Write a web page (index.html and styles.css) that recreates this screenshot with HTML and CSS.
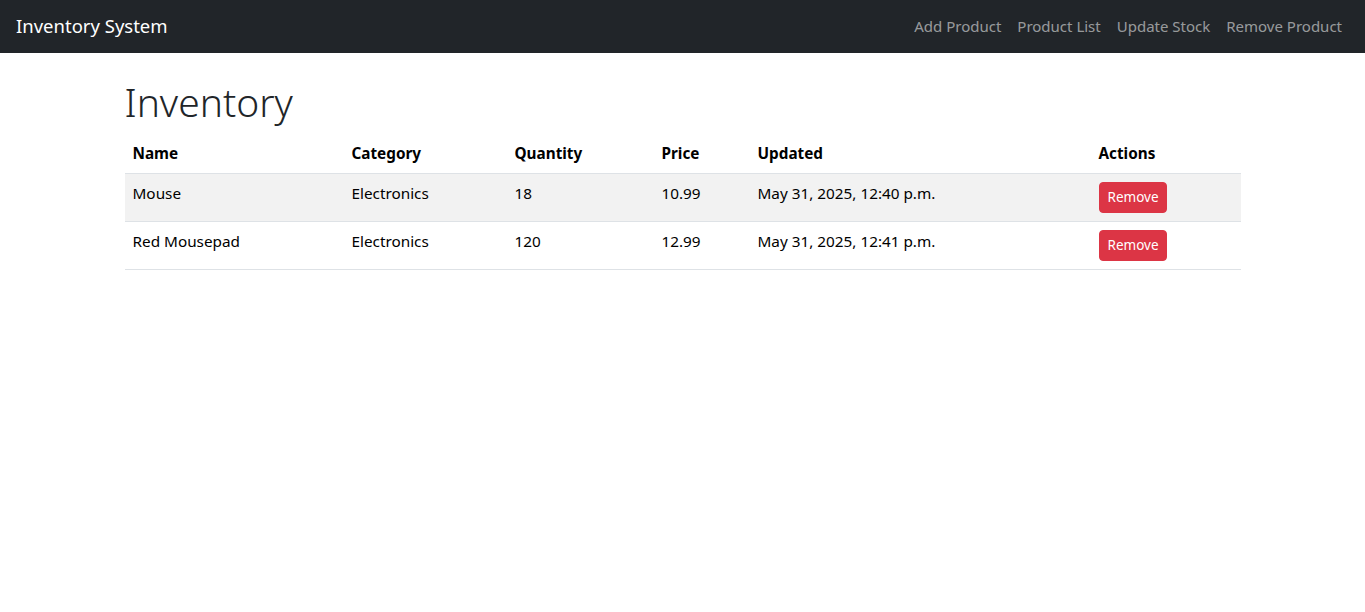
FILE: index.html
```html
<!DOCTYPE html>
<html lang="en">
<head>
<meta charset="utf-8">
<title>Inventory</title>
<link rel="stylesheet" href="styles.css">
</head>
<body>
<nav class="navbar">
  <a class="brand" href="#">Inventory System</a>
  <ul class="nav">
    <li><a class="nav-link" href="#">Add Product</a></li>
    <li><a class="nav-link" href="#">Product List</a></li>
    <li><a class="nav-link" href="#">Update Stock</a></li>
    <li><a class="nav-link" href="#">Remove Product</a></li>
  </ul>
</nav>
<main class="container">
  <h1 class="title">Inventory</h1>
  <table class="table">
    <thead>
      <tr>
        <th class="c-name">Name</th>
        <th class="c-cat">Category</th>
        <th class="c-qty">Quantity</th>
        <th class="c-price">Price</th>
        <th class="c-upd">Updated</th>
        <th class="c-act">Actions</th>
      </tr>
    </thead>
    <tbody>
      <tr class="striped">
        <td>Mouse</td>
        <td>Electronics</td>
        <td>18</td>
        <td>10.99</td>
        <td>May 31, 2025, 12:40 p.m.</td>
        <td><button class="btn-remove">Remove</button></td>
      </tr>
      <tr>
        <td>Red Mousepad</td>
        <td>Electronics</td>
        <td>120</td>
        <td>12.99</td>
        <td>May 31, 2025, 12:41 p.m.</td>
        <td><button class="btn-remove">Remove</button></td>
      </tr>
    </tbody>
  </table>
</main>
</body>
</html>
```

FILE: styles.css
```css
* { box-sizing: border-box; }
html, body {
  margin: 0;
  padding: 0;
}
body {
  font-family: "Noto Sans", "Open Sans", sans-serif;
  font-size: 16px;
  line-height: 1.5;
  color: #212529;
  background: #fff;
}
.navbar {
  height: 53px;
  background: #212529;
  display: flex;
  align-items: center;
  justify-content: space-between;
  padding: 0 15px 1px 16px;
}
.brand {
  color: #fff;
  font-size: 18.5px;
  text-decoration: none;
  line-height: 30px;
}
.nav {
  list-style: none;
  margin: 0;
  padding: 0;
  display: flex;
}
.nav-link {
  display: block;
  padding: 0 8px;
  color: rgba(255,255,255,0.55);
  text-decoration: none;
  font-size: 15px;
  line-height: 24px;
}
.container {
  width: 1140px;
  margin: 0 auto;
  padding: 0 12px;
}
.title {
  margin: 25px 0 8px;
  font-size: 39px;
  font-weight: 300;
  line-height: 48px;
  color: #212529;
}
.table {
  width: 100%;
  border-collapse: collapse;
  table-layout: fixed;
  color: #000;
}
.table th, .table td {
  padding: 8px;
  text-align: left;
  vertical-align: top;
  border-bottom: 1px solid #dee2e6;
  font-size: 15.3px;
  white-space: nowrap;
}
.table th { font-weight: 700; }
.striped td { background: #f2f2f2; }
.c-name { width: 219px; }
.c-cat { width: 163px; }
.c-qty { width: 147px; }
.c-price { width: 96px; }
.c-upd { width: 341px; }
.c-act { width: 150px; }
.btn-remove {
  font-family: inherit;
  background: #dc3545;
  color: #fff;
  border: 1px solid #dc3545;
  border-radius: 4px;
  font-size: 13.5px;
  line-height: 21px;
  padding: 4px 8px;
  width: 68px;
  height: 31px;
  cursor: pointer;
}
```
